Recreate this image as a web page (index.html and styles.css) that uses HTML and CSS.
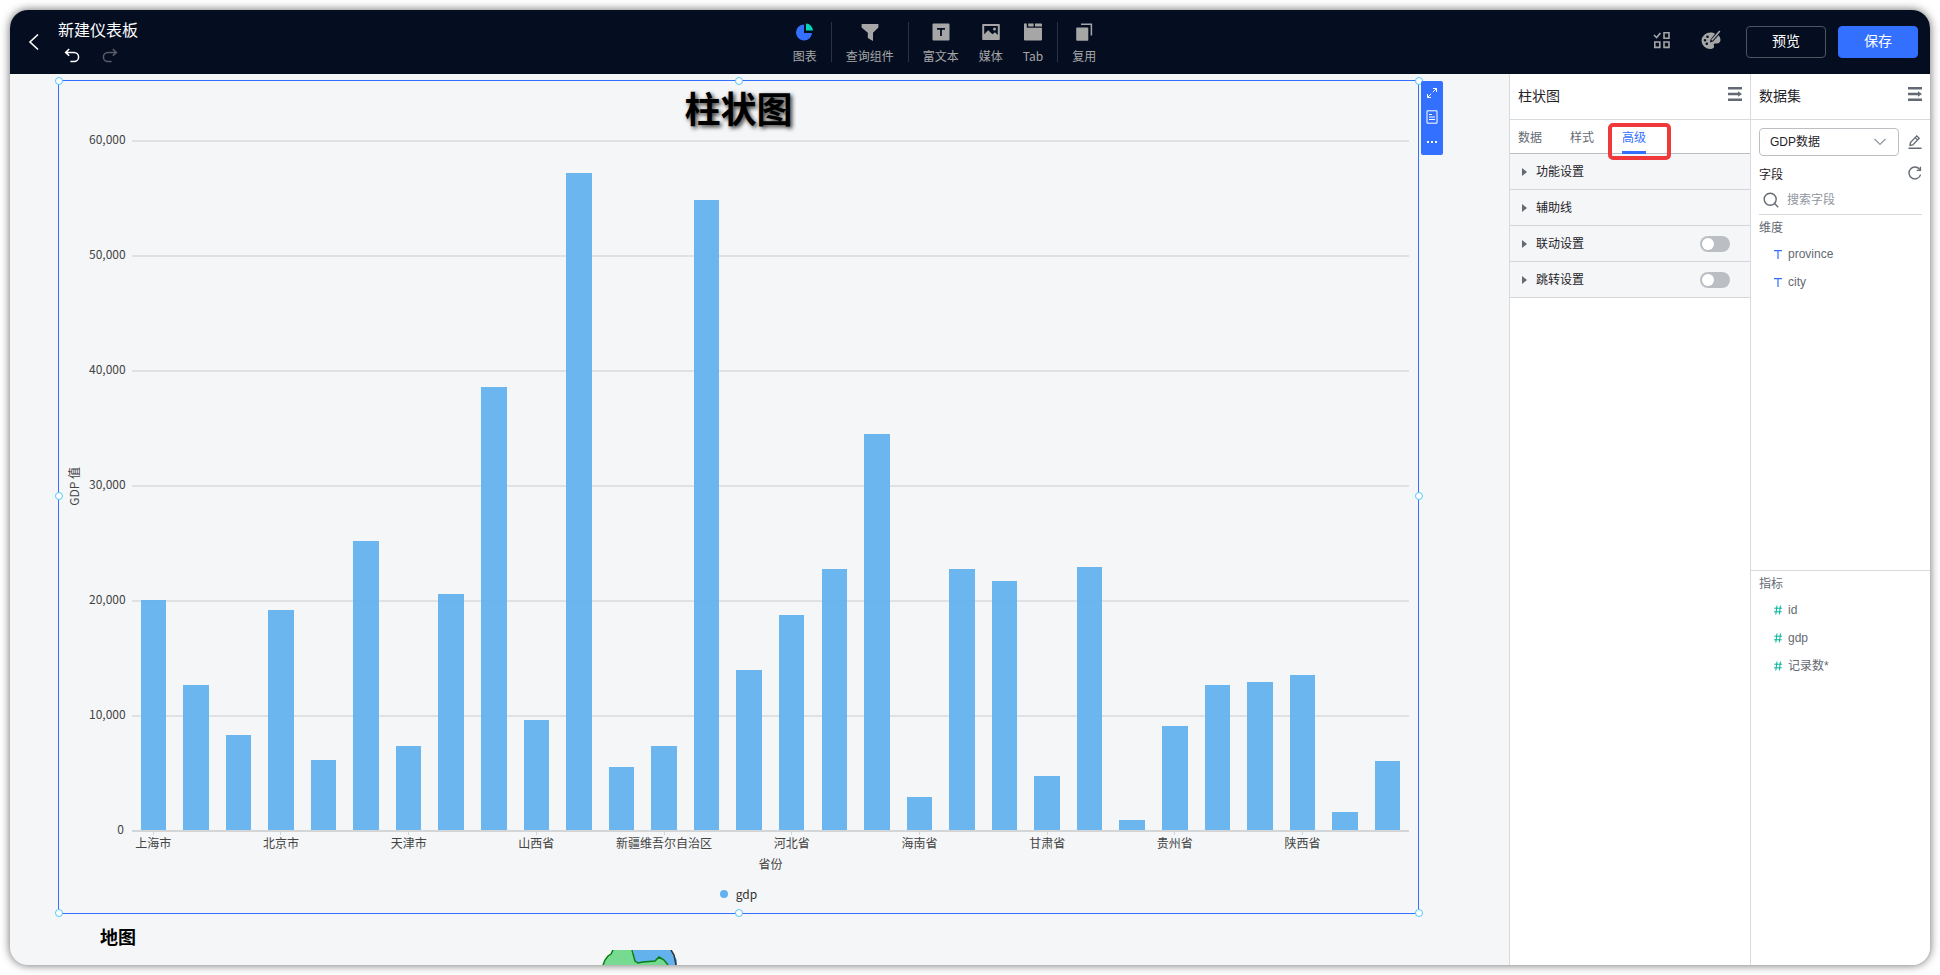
FILE: index.html
```html
<!DOCTYPE html>
<html lang="zh-CN">
<head>
<meta charset="utf-8">
<meta name="viewport" content="width=device-width, initial-scale=1">
<title>新建仪表板</title>
<link rel="stylesheet" href="styles.css">
</head>
<body>
<div class="window">
  <header class="topbar">
    <div class="topbar-left">
      <button class="icon-btn back" aria-label="返回"><svg width="12" height="18" viewBox="0 0 12 18"><path d="M10 1.5 2 9l8 7.5" fill="none" stroke="#fff" stroke-width="1.6"/></svg></button>
      <div class="board">
        <h1 class="board-name">新建仪表板</h1>
        <div class="history">
          <button class="icon-btn" aria-label="撤销"><svg width="16" height="16" viewBox="0 0 16 16"><path d="M5.2 1 1.6 4.4l3.6 3.4M2 4.4h8a4.6 4.6 0 0 1 0 9.2H6.4" fill="none" stroke="#fff" stroke-width="1.5"/></svg></button>
          <button class="icon-btn" aria-label="重做" disabled><svg width="16" height="16" viewBox="0 0 16 16"><path d="m10.8 1 3.6 3.4-3.6 3.4M14 4.4H6a4.6 4.6 0 0 0 0 9.2h3.6" fill="none" stroke="#5a5d65" stroke-width="1.5"/></svg></button>
        </div>
      </div>
    </div>

    <nav class="tools">
      <button class="tool"><svg width="18" height="18" viewBox="0 0 18 18"><path d="M8 1.5A8 8 0 1 0 16 10H8z" fill="#3370ff"/><path d="M10 .6V7.600h7A7.400 7.400 0 0 0 10 .6z" fill="#00d6b9"/></svg>图表</button>
      <span class="rule"></span>
      <button class="tool"><svg width="18" height="18" viewBox="0 0 18 18"><path d="M.6 1h16.800v3.400L12 9.800V18l-5.200-3V9.800L.6 4.400z" fill="#a6a6a6"/></svg>查询组件</button>
      <span class="rule"></span>
      <div class="tool-group">
        <button class="tool"><svg width="18" height="18" viewBox="0 0 18 18"><path fill-rule="evenodd" d="M1.500.5h15a1 1 0 0 1 1 1v15a1 1 0 0 1-1 1h-15a1 1 0 0 1-1-1v-15a1 1 0 0 1 1-1zM5 5v1.800h3.100V13h1.800V6.800H13V5z" fill="#a6a6a6"/></svg>富文本</button>
        <button class="tool"><svg width="18" height="18" viewBox="0 0 18 18"><path fill-rule="evenodd" d="M1 1h16a.8.8 0 0 1 .8.8v14.400a.8.800 0 0 1-.8.8H1a.8.800 0 0 1-.8-.8V1.800A.8.800 0 0 1 1 1zm1.200 2v8.200l4-4 4.200 4 2.600-2 2.800 2.800V3zm10.300 1.500a1.500 1.500 0 1 0 0 3 1.500 1.500 0 0 0 0-3z" fill="#a6a6a6"/></svg>媒体</button>
        <button class="tool"><svg width="18" height="18" viewBox="0 0 18 18"><path d="M0 .5h2.800v4.300H18v11.700a1 1 0 0 1-1 1H1a1 1 0 0 1-1-1zM4.200.5h5.400v3H4.200zM11 .5h6a1 1 0 0 1 1 1v2h-7z" fill="#a6a6a6"/></svg>Tab</button>
      </div>
      <span class="rule"></span>
      <button class="tool"><svg width="18" height="18" viewBox="0 0 18 18"><path d="M2 4.500h10.500a.8.800 0 0 1 .8.8V17a.8.800 0 0 1-.8.800H2a.8.800 0 0 1-.8-.8V5.300a.8.800 0 0 1 .8-.8z" fill="#a6a6a6"/><path d="M6 1.300h10.400v11.200" fill="none" stroke="#a6a6a6" stroke-width="1.500"/></svg>复用</button>
    </nav>

    <div class="topbar-right">
      <button class="icon-btn" aria-label="批量"><svg width="18" height="18" viewBox="0 0 18 18" fill="none" stroke="#a6a6a6" stroke-width="1.600"><path d="m1 4 2.600 2.600L7.400 2"/><path d="M11 1.800h5v5.400h-5zM1.800 11h5v5.400h-5zM11 11h5v5.400h-5z"/></svg></button>
      <button class="icon-btn" aria-label="外观"><svg width="20" height="20" viewBox="0 0 20 20"><path fill-rule="evenodd" d="M9.500 2.500c1.700 0 3.300.5 4.600 1.300L9.600 9.500 9 12.500l3-1 5.600-6.300c1 1.200 1.900 2.800 1.900 4.800 0 2-1.600 3.400-3.500 3.400h-1.800c-1.500 0-1.900 1.100-1.300 2.200.8 1.500-.3 3.400-3 3.400A9 8.300 0 0 1 .5 10.800a9 8.300 0 0 1 9-8.300zM4 9a1.300 1.300 0 1 0 0 2.600A1.300 1.300 0 0 0 4 9zm2.500-3.600a1.300 1.300 0 1 0 0 2.600 1.300 1.300 0 0 0 0-2.600zM5.800 12.500a1.300 1.300 0 1 0 0 2.600 1.300 1.300 0 0 0 0-2.600z" fill="#a6a6a6"/><path d="m18.800 1-8 9.300" stroke="#a6a6a6" stroke-width="1.700"/></svg></button>
      <div class="actions">
        <button class="btn">预览</button>
        <button class="btn btn-primary">保存</button>
      </div>
    </div>
  </header>

  <div class="workspace">
    <main class="canvas">
      <section class="component selected">
        <h2 class="chart-title">柱状图</h2>
        <div class="chart">
          <div class="y-title"><span>GDP 值</span></div>
          <div class="y-labels"><span>60,000</span><span>50,000</span><span>40,000</span><span>30,000</span><span>20,000</span><span>10,000</span><span>0</span></div>
          <div class="plot">
            <div class="gridlines"><i></i><i></i><i></i><i></i><i></i><i></i></div>
            <div class="bars">
              <i style="height:33.45%"></i><i style="height:21.1%"></i><i style="height:13.85%"></i><i style="height:32%"></i><i style="height:10.1%"></i><i style="height:42%"></i><i style="height:12.15%"></i><i style="height:34.2%"></i><i style="height:64.3%"></i><i style="height:16%"></i><i style="height:95.3%"></i><i style="height:9.2%"></i><i style="height:12.2%"></i><i style="height:91.5%"></i><i style="height:23.2%"></i><i style="height:31.2%"></i><i style="height:37.85%"></i><i style="height:57.5%"></i><i style="height:4.8%"></i><i style="height:37.85%"></i><i style="height:36.1%"></i><i style="height:7.9%"></i><i style="height:38.2%"></i><i style="height:1.5%"></i><i style="height:15.15%"></i><i style="height:21.1%"></i><i style="height:21.5%"></i><i style="height:22.45%"></i><i style="height:2.6%"></i><i style="height:9.95%"></i>
            </div>
          </div>
          <div class="x-labels"><span>上海市</span><span>北京市</span><span>天津市</span><span>山西省</span><span>新疆维吾尔自治区</span><span>河北省</span><span>海南省</span><span>甘肃省</span><span>贵州省</span><span>陕西省</span></div>
          <div class="x-title">省份</div>
        </div>
        <div class="legend"><i class="dot"></i>gdp</div>

        <i class="handle n w"></i><i class="handle n c"></i><i class="handle n e"></i>
        <i class="handle m w"></i><i class="handle m e"></i>
        <i class="handle s w"></i><i class="handle s c"></i><i class="handle s e"></i>

        <div class="quick">
          <button class="icon-btn" aria-label="放大"><svg width="12" height="12" viewBox="0 0 12 12" fill="none" stroke="#fff"><path d="M7 1.500h3.500V5M10.500 1.500 6.800 5.200M5 10.500H1.500V7M1.500 10.500l3.700-3.700"/></svg></button>
          <button class="icon-btn" aria-label="详情"><svg width="12" height="14" viewBox="0 0 12 14" fill="none" stroke="#fff"><path d="M1 .8h10v12.400H1zM3 4.500h3M3 7h6M3 9.500h6"/></svg></button>
          <button class="icon-btn" aria-label="更多"><svg width="12" height="12" viewBox="0 0 12 12" fill="#fff"><path d="M1 5h2v2H1zM5 5h2v2H5zM9 5h2v2H9z"/></svg></button>
        </div>
      </section>

      <section class="component map">
        <h2 class="map-title">地图</h2>
        <svg class="map-shape" width="76" height="15" viewBox="0 0 76 15"><path d="M31 0h38l6 10v5H34z" fill="#63b2ee"/><path d="M1 15 3 10l3-4 3-2 2-4h19l3 11 3 2 5-1 12-1 4-4 5 3 4 5z" fill="#76da91"/><path d="m1 15 2-5 3-4 3-2 2-4M30 0l3 11 3 2 5-1 12-1 4-4 5 3 4 5" fill="none" stroke="#0a7d14" stroke-width="1.500"/><path d="m69 0 3 5 1 5 1 5" fill="none" stroke="#333" stroke-width="1.500"/></svg>
      </section>
    </main>

    <aside class="panel settings">
      <div class="panel-head"><h2>柱状图</h2><button class="icon-btn" aria-label="收起"><svg width="16" height="14" viewBox="0 0 16 14"><path d="M1 0h14v2.400H1zM1 5.800h10v2.400H1zM1 11.600h14V14H1z" fill="#646a73"/><path d="M11 4.300 15 7l-4 2.700z" fill="#646a73"/></svg></button></div>
      <div class="tabs">
        <button class="tab">数据</button><button class="tab">样式</button><button class="tab active">高级</button>
        <span class="marker"></span>
      </div>
      <div class="row"><button class="fold">功能设置</button></div>
      <div class="row"><button class="fold">辅助线</button></div>
      <div class="row"><button class="fold">联动设置</button><input class="switch" type="checkbox" role="switch" aria-label="联动设置"></div>
      <div class="row"><button class="fold">跳转设置</button><input class="switch" type="checkbox" role="switch" aria-label="跳转设置"></div>
    </aside>

    <aside class="panel dataset">
      <div class="panel-head"><h2>数据集</h2><button class="icon-btn" aria-label="收起"><svg width="16" height="14" viewBox="0 0 16 14"><path d="M1 0h14v2.400H1zM1 5.800h10v2.400H1zM1 11.600h14V14H1z" fill="#646a73"/><path d="M11 4.300 15 7l-4 2.700z" fill="#646a73"/></svg></button></div>
      <div class="dimensions">
        <div class="source">
          <div class="select-box">
            <select aria-label="数据集"><option>GDP数据</option></select>
            <svg class="chevron" width="12" height="8" viewBox="0 0 12 8"><path d="m.5 1 5.500 5.500L11.500 1" fill="none" stroke="#8f959e" stroke-width="1.200"/></svg>
          </div>
          <button class="icon-btn" aria-label="编辑"><svg width="14" height="16" viewBox="0 0 14 16" fill="none" stroke="#646a73" stroke-width="1.300"><path d="M2 11.500 2.400 8.600 8.800 1.900l2.400 2.300L4.800 11zM7.200 3.600l2.400 2.300"/><path d="M.5 14.200h13" stroke-width="1.600"/></svg></button>
        </div>
        <div class="fields-head"><h3>字段</h3><button class="icon-btn" aria-label="刷新"><svg width="14" height="14" viewBox="0 0 14 14" fill="none" stroke="#646a73" stroke-width="1.400"><path d="M12.600 8.600A5.900 5.900 0 1 1 11.800 3.600"/><path d="M12.400.8v3.600H8.800"/></svg></button></div>
        <label class="search"><svg width="16" height="16" viewBox="0 0 16 16" fill="none" stroke="#646a73" stroke-width="1.400"><circle cx="7.200" cy="7.200" r="6"/><path d="m11.600 11.600 3.600 3.600"/></svg><input type="search" placeholder="搜索字段" aria-label="搜索字段"></label>
        <h4>维度</h4>
        <ul class="fields">
          <li><svg width="8" height="9" viewBox="0 0 8 9"><path d="M0 .700h8M4 .700V9" stroke="#3370ff" stroke-width="1.200"/></svg>province</li>
          <li><svg width="8" height="9" viewBox="0 0 8 9"><path d="M0 .700h8M4 .700V9" stroke="#3370ff" stroke-width="1.200"/></svg>city</li>
        </ul>
      </div>
      <div class="metrics">
        <h4>指标</h4>
        <ul class="fields">
          <li><svg width="8" height="10" viewBox="0 0 8 10"><path d="M3 .5 1.800 9.500M6.500.5 5.300 9.500M.3 3.200h7.700M0 6.800h7.700" stroke="#04b49c"/></svg>id</li>
          <li><svg width="8" height="10" viewBox="0 0 8 10"><path d="M3 .5 1.800 9.500M6.500.5 5.300 9.500M.3 3.200h7.700M0 6.800h7.700" stroke="#04b49c"/></svg>gdp</li>
          <li><svg width="8" height="10" viewBox="0 0 8 10"><path d="M3 .5 1.800 9.500M6.500.5 5.300 9.500M.3 3.200h7.700M0 6.800h7.700" stroke="#04b49c"/></svg>记录数*</li>
        </ul>
      </div>
    </aside>
  </div>
</div>
</body>
</html>
```
FILE: styles.css
```css
* { box-sizing: border-box; }
body {
  margin: 0;
  padding: 10px;
  background: #fff;
  color: #1f2329;
  font: 12px/20px "Liberation Sans", "Noto Sans CJK SC", sans-serif;
}
h1, h2, h3, h4, ul { margin: 0; padding: 0; font-weight: 400; list-style: none; }
button, input, select { font: inherit; color: inherit; }
h3, h4 { font-size: 12px; }
svg { display: block; flex: none; }
.icon-btn { display: flex; padding: 0; border: 0; background: none; }

.window {
  display: flex;
  flex-direction: column;
  height: calc(100vh - 20px);
  min-height: 600px;
  border-radius: 18px;
  overflow: hidden;
  background: #f5f6f7;
  box-shadow: 0 0 10px rgba(0, 0, 0, .6);
}

/* top bar */
.topbar {
  display: flex;
  flex: none;
  justify-content: space-between;
  align-items: center;
  height: 64px;
  padding: 0 12px 0 18px;
  background: #050e21;
  color: #a6a6a6;
}
.topbar-left { display: flex; align-items: center; gap: 18px; }
.board { width: 178px; }
.board-name { color: #fff; font-size: 16px; line-height: 24px; }
.history { display: flex; gap: 22px; padding: 5px 6px 1px; }
.tools { display: flex; align-items: center; gap: 14px; }
.tool-group { display: flex; gap: 20px; }
.tool {
  display: flex;
  flex-direction: column;
  align-items: center;
  gap: 5px;
  padding: 4px 0 0;
  border: 0;
  background: none;
  font-family: "Noto Sans CJK SC", sans-serif;
}
.rule { width: 1px; height: 40px; background: #2b3242; }
.topbar-right { display: flex; align-items: center; gap: 30px; }
.actions { display: flex; gap: 12px; margin-left: -5px; }
.topbar-right > .icon-btn { padding-bottom: 4px; }
.btn {
  width: 80px;
  height: 32px;
  padding: 0 0 2px;
  border: 1px solid #4d535f;
  border-radius: 4px;
  background: transparent;
  color: #fff;
  font-size: 14px;
}
.btn-primary { border-color: #3370ff; background: #3370ff; }

.workspace { display: flex; flex: 1; min-height: 0; }

/* canvas */
.canvas {
  display: flex;
  flex: 1;
  flex-direction: column;
  min-width: 0;
  padding: 6px 90px 0 48px;
  font-family: "Noto Sans CJK SC", sans-serif;
}
.component { position: relative; }
.selected {
  display: flex;
  flex: 1;
  flex-direction: column;
  min-height: 0;
  border: 1px solid #3370ff;
}
.chart-title {
  height: 60px;
  color: #000;
  font-size: 36px;
  font-weight: 700;
  line-height: 52px;
  text-align: center;
  text-shadow: 2px 2px 4px rgba(0, 0, 0, .8);
}
.chart {
  display: grid;
  flex: 1;
  grid-template: minmax(0, 1fr) 22px 20px / 30px 43px minmax(0, 1fr);
  min-height: 0;
  padding-right: 9px;
  color: #444;
}
.y-title { display: flex; align-items: center; justify-content: center; }
.y-title span { writing-mode: vertical-rl; text-orientation: sideways; transform: rotate(180deg); }
.y-labels {
  display: flex;
  flex-direction: column;
  justify-content: space-between;
  margin: -12px 0 -8px;
  padding-right: 8px;
  text-align: right;
}
.plot { display: grid; margin-bottom: -1px; border-bottom: 2px solid #d3d5d7; }
.gridlines, .bars { display: flex; grid-area: 1 / 1; min-height: 0; }
.gridlines { flex-direction: column; margin-top: -1px; }
.gridlines i { flex: 1; border-top: 2px solid #dfe1e3; }
.bars { align-items: flex-end; justify-content: space-around; }
.bars i { width: 2%; background: rgba(99, 178, 238, .95); }
.x-labels {
  display: grid;
  grid-column: 3;
  grid-template-columns: repeat(30, minmax(0, 1fr));
  padding-top: 1px;
}
.x-labels span {
  display: flex;
  grid-column-end: span 1;
  flex-direction: column;
  align-items: center;
  white-space: nowrap;
}
.x-labels span::before { flex: none; width: 1px; height: 3px; margin-bottom: -2px; background: #d3d5d7; content: ""; }
.x-labels span:nth-child(2) { grid-column-start: 4; }
.x-labels span:nth-child(3) { grid-column-start: 7; }
.x-labels span:nth-child(4) { grid-column-start: 10; }
.x-labels span:nth-child(5) { grid-column-start: 13; }
.x-labels span:nth-child(6) { grid-column-start: 16; }
.x-labels span:nth-child(7) { grid-column-start: 19; }
.x-labels span:nth-child(8) { grid-column-start: 22; }
.x-labels span:nth-child(9) { grid-column-start: 25; }
.x-labels span:nth-child(10) { grid-column-start: 28; }
.x-title { grid-column: 3; line-height: 22px; text-align: center; }
.legend { display: flex; align-items: center; justify-content: center; gap: 8px; height: 40px; padding-top: 2px; color: #333; }
.dot { width: 8px; height: 8px; border-radius: 50%; background: #63b2ee; }

.handle {
  position: absolute;
  width: 8px;
  height: 8px;
  border: 1px solid #59c7f9;
  border-radius: 50%;
  background: #fff;
}
.n { top: -4px; }
.m { top: calc(50% - 5px); }
.s { bottom: -4px; }
.w { left: -4px; }
.c { left: calc(50% - 4px); }
.e { right: -5px; }
.quick {
  position: absolute;
  top: 0;
  left: calc(100% + 3px);
  display: flex;
  flex-direction: column;
  align-items: center;
  justify-content: space-around;
  width: 22px;
  height: 74px;
  padding-bottom: 1px;
  border-radius: 2px;
  background: #3370ff;
}

.map { flex: none; height: 51px; padding: 8px 42px 0; }
.map-title { color: #000; font-size: 18px; font-weight: 700; line-height: 28px; }
.map-shape { margin-left: calc(39% + 4px); }

/* side panels */
.panel { flex: none; border-left: 1px solid #d9dadc; background: #fff; }
.settings { width: 241px; }
.dataset { display: flex; flex-direction: column; width: 180px; }
.panel-head {
  display: flex;
  flex: none;
  align-items: center;
  justify-content: space-between;
  height: 46px;
  padding: 0 7px 2px 8px;
  border-bottom: 1px solid #d9dadc;
}
.panel-head h2 { font-size: 14px; }
.panel-head .icon-btn { padding-bottom: 3px; }
.tabs {
  position: relative;
  display: flex;
  gap: 28px;
  height: 34px;
  padding: 0 8px;
  border-bottom: 1px solid #bbbfc4;
}
.tab {
  height: 34px;
  padding: 4px 0 0;
  border: 0;
  border-bottom: 3px solid transparent;
  background: none;
  color: #646a73;
}
.active { border-color: #3370ff; color: #3370ff; }
.marker {
  position: absolute;
  top: 3px;
  left: 98px;
  width: 63px;
  height: 37px;
  border: 4px solid #f0393b;
  border-radius: 5px;
}
.row {
  display: flex;
  align-items: center;
  height: 36px;
  padding: 0 20px 0 12px;
  border-bottom: 1px solid #d3d5d8;
  background: #f5f6f7;
}
.fold {
  display: flex;
  flex: 1;
  align-items: center;
  gap: 9px;
  padding: 0;
  border: 0;
  background: none;
  text-align: left;
}
.fold::before { border: 4px solid transparent; border-right: 0; border-left: 5px solid #646a73; content: ""; }
.switch {
  display: flex;
  align-items: center;
  appearance: none;
  width: 30px;
  height: 16px;
  margin: 0;
  padding: 0 2px;
  border-radius: 8px;
  background: #bbbfc4;
}
.switch::before { width: 12px; height: 12px; border-radius: 50%; background: #fff; content: ""; }
.switch:checked { justify-content: flex-end; background: #3370ff; }

.dimensions { height: 451px; padding: 8px 8px 0; border-bottom: 1px solid #d9dadc; }
.source, .fields-head { display: flex; align-items: center; justify-content: space-between; }
.select-box { position: relative; width: 140px; }
.select-box select {
  display: block;
  width: 100%;
  height: 28px;
  padding: 0 24px 0 10px;
  border: 1px solid #bbbfc4;
  border-radius: 4px;
  appearance: none;
  background: #fff;
}
.chevron { position: absolute; top: 10px; right: 13px; pointer-events: none; }
.fields-head { height: 32px; padding-top: 5px; }
.fields-head .icon-btn { padding-bottom: 3px; }
.search {
  display: flex;
  align-items: center;
  gap: 8px;
  height: 27px;
  padding: 0 4px 2px;
  border-bottom: 1px solid #d9dadc;
}
.search input { flex: 1; min-width: 0; padding: 0; border: 0; outline: 0; background: none; }
.search input::placeholder { color: #8f959e; opacity: 1; }
h4 { color: #646a73; line-height: 26px; }
.fields { color: #646a73; }
.fields li { display: flex; align-items: center; gap: 6px; height: 28px; padding: 0 0 2px 15px; }
.metrics { padding: 0 8px; }
```
